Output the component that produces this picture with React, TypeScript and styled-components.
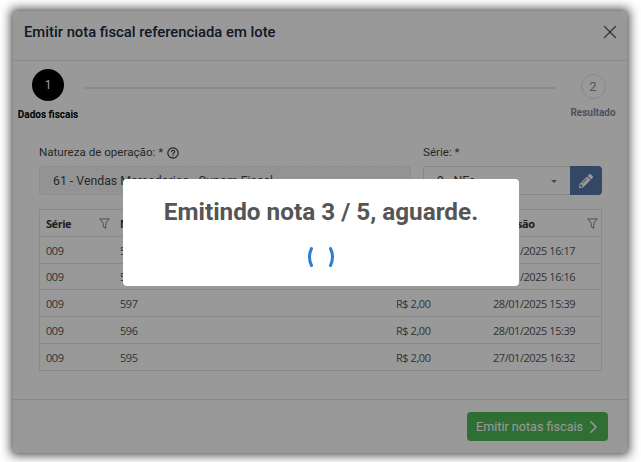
import React from "react";
import styled, {createGlobalStyle} from "styled-components";
import {ChevronRight, X} from "lucide-react";
import {FaPencilAlt} from "react-icons/fa";

const GlobalStyle = createGlobalStyle`
  html, body {
    margin: 0;
    padding: 0;
    background: #ffffff;
    font-family: "Roboto", "Liberation Sans", sans-serif;
  }
`

const Page = styled.div`
  width: 641px;
  height: 462px;
  padding: 11px 14px 9px 13px;
  box-sizing: border-box;
  overflow: hidden;
`

const Modal = styled.div`
  position: relative;
  height: 442px;
  background: #fff;
  box-shadow: 0 0 10px 2px rgba(0, 0, 0, .75);
  display: flex;
  flex-direction: column;
`

const Header = styled.div`
  height: 50px;
  flex: none;
  box-sizing: border-box;
  border-bottom: 1px solid #e3e5e8;
  padding: 0 6px 0 11px;
  display: flex;
  align-items: center;
  justify-content: space-between;
`

const Title = styled.h1`
  margin: 0 0 8px;
  font-size: 14.8px;
  font-weight: 500;
  color: #192a42;
`

const CloseButton = styled.span`
  display: flex;
  margin-bottom: 8px;
  color: #555;
`

const Stepper = styled.div`
  display: flex;
  align-items: flex-start;
  height: 74px;
  padding: 8px 12px 0 5px;
`

const Step = styled.div<{$width: number}>`
  width: ${p => p.$width}px;
  flex: none;
  display: flex;
  flex-direction: column;
  align-items: center;
`

const StepCircle = styled.div<{$active?: boolean}>`
  box-sizing: border-box;
  width: ${p => p.$active ? 32 : 25}px;
  height: ${p => p.$active ? 32 : 25}px;
  margin-top: ${p => p.$active ? 0 : 5}px;
  border-radius: 50%;
  border: ${p => p.$active ? "none" : "1px solid #e2e4e8"};
  background: ${p => p.$active ? "#000" : "#fff"};
  color: ${p => p.$active ? "#fff" : "#8a8f98"};
  display: flex;
  align-items: center;
  justify-content: center;
  font-size: ${p => p.$active ? 12 : 13}px;
`

const StepLabel = styled.span<{$active?: boolean}>`
  margin-top: 8px;
  font-size: 10px;
  line-height: 12px;
  font-weight: 700;
  white-space: nowrap;
  color: ${p => p.$active ? "#000" : "#7d879c"};
`

const StepLine = styled.div`
  flex: 1;
  height: 2px;
  margin: 18px 15px 0 7px;
  background: #e6e8ec;
`

const Body = styled.div`
  flex: 1;
  padding: 0 25px 0 26px;
`

const FormRow = styled.div`
  display: grid;
  grid-template-columns: 372px 179px;
  column-gap: 12px;
`

const Field = styled.div`
  display: flex;
  flex-direction: column;
`

const Label = styled.label`
  height: 19px;
  margin-bottom: 4px;
  font-size: 11.6px;
  line-height: 19px;
  color: #444;
  display: flex;
  align-items: center;
  gap: 4px;
  white-space: nowrap;
`

const ReadOnlyInput = styled.div`
  height: 29px;
  box-sizing: border-box;
  padding: 0 13px;
  border: 1px dashed #e8e8e8;
  border-radius: 3px;
  background: #f6f6f6;
  font-size: 12.3px;
  line-height: 28px;
  color: #444;
  white-space: nowrap;
  overflow: hidden;
`

const SelectGroup = styled.div`
  display: flex;
  height: 29px;
`

const Select = styled.div`
  flex: 1;
  box-sizing: border-box;
  border: 1px solid #e0e0e0;
  border-right: none;
  border-radius: 3px 0 0 3px;
  padding: 0 13px;
  font-size: 12.3px;
  line-height: 28px;
  color: #444;
  display: flex;
  justify-content: space-between;
`

const Caret = styled.span`
  width: 0;
  height: 0;
  margin-top: 13px;
  border-left: 3.5px solid transparent;
  border-right: 3.5px solid transparent;
  border-top: 3.5px solid #777;
`

const EditButton = styled.span`
  width: 32px;
  background: #5778ab;
  border-radius: 0 4px 4px 0;
  color: #fff;
  display: flex;
  align-items: center;
  justify-content: center;
`

const Table = styled.div`
  margin-top: 14px;
  border: 1px solid #e4e4e4;
  border-bottom: none;
  font-family: "Open Sans", "Liberation Sans", sans-serif;
  font-size: 11px;
  letter-spacing: -.45px;
  color: #555;
`

const Row = styled.div<{$head?: boolean}>`
  display: grid;
  grid-template-columns: 74px 276px 97px 115px;
  height: 26.8px;
  box-sizing: border-box;
  border-bottom: 1px solid #e4e4e4;
  align-items: center;
  font-weight: ${p => p.$head ? 700 : 400};
  color: ${p => p.$head ? "#333" : "#555"};
`

const Cell = styled.div`
  padding: 1px 4px 0 6px;
  display: flex;
  justify-content: space-between;
  align-items: center;
  white-space: nowrap;
`

const Footer = styled.div`
  height: 54px;
  flex: none;
  box-sizing: border-box;
  border-top: 1px solid #e3e5e8;
  padding: 12px 19px 0 0;
  display: flex;
  justify-content: flex-end;
  align-items: flex-start;
`

const EmitButton = styled.span`
  width: 141px;
  height: 29px;
  box-sizing: border-box;
  padding: 0 4px 0 9px;
  background: #4fba58;
  border-radius: 4px;
  color: #fff;
  font-size: 12.6px;
  white-space: nowrap;
  display: flex;
  justify-content: space-between;
  align-items: center;
`

const Backdrop = styled.div`
  position: absolute;
  inset: 0;
  background: rgba(0, 0, 0, .4);
`

const Alert = styled.div`
  position: absolute;
  left: 110px;
  top: 168px;
  width: 396px;
  height: 107px;
  border-radius: 4px;
  background: #fff;
  display: flex;
  flex-direction: column;
  align-items: center;
`

const AlertTitle = styled.h2`
  margin: 18px 0 0;
  font-size: 24.3px;
  line-height: 30px;
  font-weight: 700;
  color: #555;
  white-space: nowrap;
`

const Spinner = styled.svg`
  margin-top: 19px;
`

const FilterIcon = () => (
  <svg width="11" height="11" viewBox="0 0 12 12" fill="none" stroke="#777" strokeWidth="1">
    <path d="M.8 1h10.4L7.4 5.8v5.4L4.6 9.6V5.8z" strokeLinejoin="round" />
  </svg>
)

const HelpIcon = () => (
  <svg width="12" height="12" viewBox="0 0 13 13" fill="none" stroke="#333" strokeWidth="1.2">
    <circle cx="6.5" cy="6.5" r="5.6" />
    <path d="M4.8 5.2c0-2.2 3.5-2.2 3.5-.1 0 1.3-1.8 1.3-1.8 2.7" strokeLinecap="round" />
    <circle cx="6.5" cy="9.6" r=".6" fill="#333" stroke="none" />
  </svg>
)

const rows = [
  {serie: "009", numero: "598", valor: "R$ 2,00", data: "29/01/2025 16:17"},
  {serie: "009", numero: "598", valor: "R$ 2,00", data: "29/01/2025 16:16"},
  {serie: "009", numero: "597", valor: "R$ 2,00", data: "28/01/2025 15:39"},
  {serie: "009", numero: "596", valor: "R$ 2,00", data: "28/01/2025 15:39"},
  {serie: "009", numero: "595", valor: "R$ 2,00", data: "27/01/2025 16:32"},
]

export default function App(): React.JSX.Element {
  return (
    <Page>
      <GlobalStyle />
      <Modal>
        <Header>
          <Title>Emitir nota fiscal referenciada em lote</Title>
          <CloseButton><X size={22} strokeWidth={1.3} /></CloseButton>
        </Header>
        <Stepper>
          <Step $width={60}>
            <StepCircle $active>1</StepCircle>
            <StepLabel $active>Dados fiscais</StepLabel>
          </Step>
          <StepLine />
          <Step $width={44}>
            <StepCircle>2</StepCircle>
            <StepLabel>Resultado</StepLabel>
          </Step>
        </Stepper>
        <Body>
          <FormRow>
            <Field>
              <Label>Natureza de operação: * <HelpIcon /></Label>
              <ReadOnlyInput>61 - Vendas Mercadorias - Cupom Fiscal</ReadOnlyInput>
            </Field>
            <Field>
              <Label>Série: *</Label>
              <SelectGroup>
                <Select>9 - NFe<Caret /></Select>
                <EditButton><FaPencilAlt size={14} /></EditButton>
              </SelectGroup>
            </Field>
          </FormRow>
          <Table>
            <Row $head>
              <Cell>Série <FilterIcon /></Cell>
              <Cell>Número</Cell>
              <Cell>Valor</Cell>
              <Cell>Emissão <FilterIcon /></Cell>
            </Row>
            {rows.map((row, i) => (
              <Row key={i}>
                <Cell>{row.serie}</Cell>
                <Cell>{row.numero}</Cell>
                <Cell>{row.valor}</Cell>
                <Cell>{row.data}</Cell>
              </Row>
            ))}
          </Table>
        </Body>
        <Footer>
          <EmitButton>Emitir notas fiscais <ChevronRight size={22} strokeWidth={1.8} /></EmitButton>
        </Footer>
        <Backdrop />
        <Alert>
          <AlertTitle>Emitindo nota 3 / 5, aguarde.</AlertTitle>
          <Spinner width="30" height="22" viewBox="0 0 30 22" fill="none" stroke="#2a7fd0" strokeWidth="3" strokeLinecap="round">
            <path d="M5.5 2.5Q1.5 11 5.5 19.5" />
            <path d="M24.5 2.5Q28.5 11 24.5 19.5" />
          </Spinner>
        </Alert>
      </Modal>
    </Page>
  )
}
